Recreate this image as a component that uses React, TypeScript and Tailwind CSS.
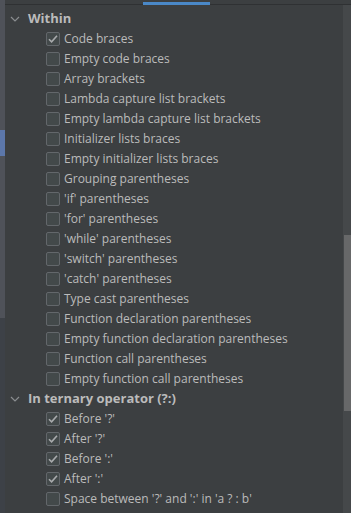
import React from 'react';

type Row = { label: string; checked?: boolean };

const within: Row[] = [
  { label: 'Code braces', checked: true },
  { label: 'Empty code braces' },
  { label: 'Array brackets' },
  { label: 'Lambda capture list brackets' },
  { label: 'Empty lambda capture list brackets' },
  { label: 'Initializer lists braces' },
  { label: 'Empty initializer lists braces' },
  { label: 'Grouping parentheses' },
  { label: "'if' parentheses" },
  { label: "'for' parentheses" },
  { label: "'while' parentheses" },
  { label: "'switch' parentheses" },
  { label: "'catch' parentheses" },
  { label: 'Type cast parentheses' },
  { label: 'Function declaration parentheses' },
  { label: 'Empty function declaration parentheses' },
  { label: 'Function call parentheses' },
  { label: 'Empty function call parentheses' },
];

const ternary: Row[] = [
  { label: "Before '?'", checked: true },
  { label: "After '?'", checked: true },
  { label: "Before ':'", checked: true },
  { label: "After ':'", checked: true },
  { label: "Space between '?' and ':' in 'a ? : b'" },
];

const Chevron = () => (
  <svg width="10" height="6" viewBox="0 0 10 6" className="shrink-0">
    <path d="M1 1l4 4 4-4" fill="none" stroke="#8a8d90" strokeWidth="1.2" />
  </svg>
);

const Checkbox = ({ checked }: { checked?: boolean }) => (
  <div className="w-[14px] h-[14px] shrink-0 rounded-[2px] border border-[#63676b] bg-[#43494a] flex items-center justify-center">
    {checked && (
      <svg width="12" height="12" viewBox="0 0 12 12">
        <path d="M2 6.2l2.6 2.6L10 2.8" fill="none" stroke="#a9abad" strokeWidth="1.6" />
      </svg>
    )}
  </div>
);

const Group = ({ title, rows }: { title: string; rows: Row[] }) => (
  <div>
    <div className="h-5 flex items-center pl-[5px]">
      <Chevron />
      <span className="ml-[8px] font-bold text-[13px]">{title}</span>
    </div>
    {rows.map((r) => (
      <div key={r.label} className="h-5 flex items-center pl-[41px]">
        <Checkbox checked={r.checked} />
        <span className="ml-[4px] whitespace-nowrap">{r.label}</span>
      </div>
    ))}
  </div>
);

export default function App() {
  return (
    <div
      className="w-[351px] h-[513px] overflow-hidden bg-[#3c3f41] text-[#bbbbbb] text-[12px] flex"
      style={{ fontFamily: '"Open Sans", "Noto Sans", sans-serif' }}
    >
      {/* left gutter */}
      <div className="w-[5px] flex flex-col shrink-0">
        <div className="h-[130px] bg-[#4f5259]" />
        <div className="h-[26px] bg-[#5c77aa]" />
        <div className="h-[162px] bg-[#4f5259]" />
        <div className="flex-1 bg-[#3d4147]" />
      </div>

      <div className="flex-1 flex flex-col">
        <div className="h-[5px] flex">
          <div className="w-[138px] border-b border-[#2f3133]" />
          <div className="w-[67px] bg-[#4a88c7] mt-[2px]" />
          <div className="flex-1 border-b border-[#2f3133]" />
        </div>
        <div className="flex-1 flex">
          <div className="flex-1 pt-[4px]">
            <Group title="Within" rows={within} />
            <Group title="In ternary operator (?:)" rows={ternary} />
          </div>
          <div className="w-[8px] bg-[#45484a] flex flex-col">
            <div className="h-[230px]" />
            <div className="h-[176px] ml-[1px] bg-[#676869]" />
          </div>
        </div>
      </div>
    </div>
  );
}
